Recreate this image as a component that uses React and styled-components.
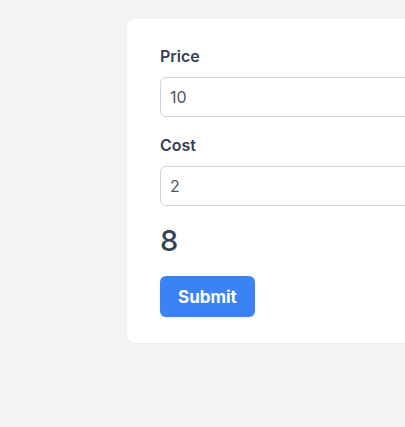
import React, { useState } from "react";
import styled, { createGlobalStyle } from "styled-components";

const GlobalStyle = createGlobalStyle`
  html, body {
    margin: 0;
    padding: 0;
    background: #f3f4f6;
    overflow: hidden;
    font-family: Inter, "Noto Sans", sans-serif;
  }
`;

const Page = styled.div`
  width: 405px;
  height: 427px;
  padding-top: 19px;
  padding-left: 127px;
  box-sizing: border-box;
`;

const Card = styled.form`
  width: 448px;
  background: #ffffff;
  border-radius: 8px;
  padding: 25px 33px 26px;
  box-sizing: border-box;
  box-shadow: 0 1px 2px rgba(0, 0, 0, 0.03);
  display: flex;
  flex-direction: column;
`;

const Field = styled.div`
  display: flex;
  flex-direction: column;
  margin-bottom: 16px;
`;

const Label = styled.label`
  font-size: 16px;
  font-weight: 600;
  line-height: 24px;
  color: #374151;
  margin-bottom: 9px;
`;

const Input = styled.input`
  height: 40px;
  box-sizing: border-box;
  border: 1px solid #d1d5db;
  border-radius: 6px;
  padding: 0 9px;
  font-family: inherit;
  font-size: 16px;
  color: #4b5563;
  outline: none;
`;

const Result = styled.div`
  font-size: 29px;
  font-weight: 500;
  line-height: 36px;
  color: #374151;
  margin: 1px 0 17px;
`;

const Button = styled.button`
  align-self: flex-start;
  height: 41px;
  padding: 0 18px;
  border: none;
  border-radius: 6px;
  background: #3b82f6;
  color: #ffffff;
  font-family: inherit;
  font-size: 17px;
  font-weight: 700;
  cursor: pointer;
  box-shadow: 0 1px 2px rgba(0, 0, 0, 0.08);
`;

export default function App() {
  const [price, setPrice] = useState("10");
  const [cost, setCost] = useState("2");
  const profit = (Number(price) || 0) - (Number(cost) || 0);

  return (
    <>
      <GlobalStyle />
      <Page>
        <Card onSubmit={(e) => e.preventDefault()}>
          <Field>
            <Label htmlFor="price">Price</Label>
            <Input id="price" value={price} onChange={(e) => setPrice(e.target.value)} />
          </Field>
          <Field>
            <Label htmlFor="cost">Cost</Label>
            <Input id="cost" value={cost} onChange={(e) => setCost(e.target.value)} />
          </Field>
          <Result>{profit}</Result>
          <Button type="submit">Submit</Button>
        </Card>
      </Page>
    </>
  );
}
